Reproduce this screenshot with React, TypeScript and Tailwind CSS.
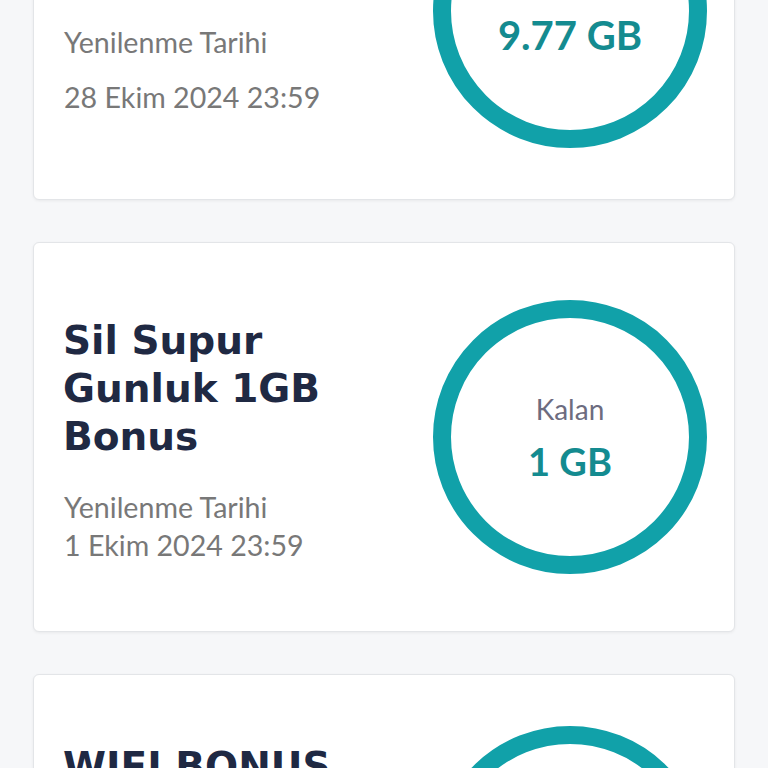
import React from "react";

type Paket = {
  title: string;
  kalan: string;
  tarih: string;
  valueSize: string;
  cardPad: string;
  align: string;
  colExtra: string;
  dateGap: string;
};

const paketler: Paket[] = [
  {
    title: "Haftalik 10GB Internet",
    kalan: "9.77 GB",
    tarih: "28 Ekim 2024 23:59",
    valueSize: "text-[40px] leading-[48px]",
    cardPad: "pt-[63px] pb-[51px]",
    align: "items-center",
    colExtra: "mb-[6px]",
    dateGap: "mt-[17px]",
  },
  {
    title: "Sil Supur Gunluk 1GB Bonus",
    kalan: "1 GB",
    tarih: "1 Ekim 2024 23:59",
    valueSize: "text-[38px] leading-[44px]",
    cardPad: "py-[57px]",
    align: "items-center",
    colExtra: "mt-[7px]",
    dateGap: "mt-0",
  },
  {
    title: "WIFI BONUS",
    kalan: "5 GB",
    tarih: "1 Ekim 2024 23:59",
    valueSize: "text-[38px] leading-[44px]",
    cardPad: "pt-[51px] pb-[57px]",
    align: "items-start",
    colExtra: "mt-[17px]",
    dateGap: "mt-0",
  },
];

function Halka({ kalan, valueSize }: { kalan: string; valueSize: string }) {
  return (
    <div className="w-[274px] h-[274px] shrink-0 rounded-full border-[18px] border-[#11a1a9] flex flex-col items-center justify-center">
      <span className="font-['Lato',sans-serif] text-[28px] leading-[36px] text-[#6d6c7f]">
        Kalan
      </span>
      <span
        className={`mt-[12px] font-['Lato',sans-serif] font-bold text-[#148b90] ${valueSize}`}
      >
        {kalan}
      </span>
    </div>
  );
}

function PaketKart({ p }: { p: Paket }) {
  return (
    <div
      className={`bg-white border border-[#e3e5e8] rounded-[6px] shadow-[0_1px_3px_rgba(0,0,0,0.06)] flex justify-between pl-[29px] pr-[27px] ${p.cardPad} ${p.align}`}
    >
      <div className={`w-[340px] flex flex-col ${p.colExtra}`}>
        <h2 className="font-['DejaVu_Sans',sans-serif] font-bold text-[39px] leading-[48px] text-[#1f2943]">
          {p.title}
        </h2>
        <p className="mt-[27px] pl-px font-['Lato',sans-serif] text-[28.6px] leading-[38px] text-[#787878]">
          Yenilenme Tarihi
        </p>
        <p
          className={`pl-px font-['Lato',sans-serif] text-[28.6px] leading-[38px] text-[#787878] ${p.dateGap}`}
        >
          {p.tarih}
        </p>
      </div>
      <Halka kalan={p.kalan} valueSize={p.valueSize} />
    </div>
  );
}

export default function App() {
  return (
    <div className="w-[768px] h-[768px] overflow-hidden bg-[#f6f7f9]">
      <div className="-mt-[190px] px-[33px] flex flex-col gap-[42px]">
        {paketler.map((p) => (
          <PaketKart key={p.title} p={p} />
        ))}
      </div>
    </div>
  );
}
